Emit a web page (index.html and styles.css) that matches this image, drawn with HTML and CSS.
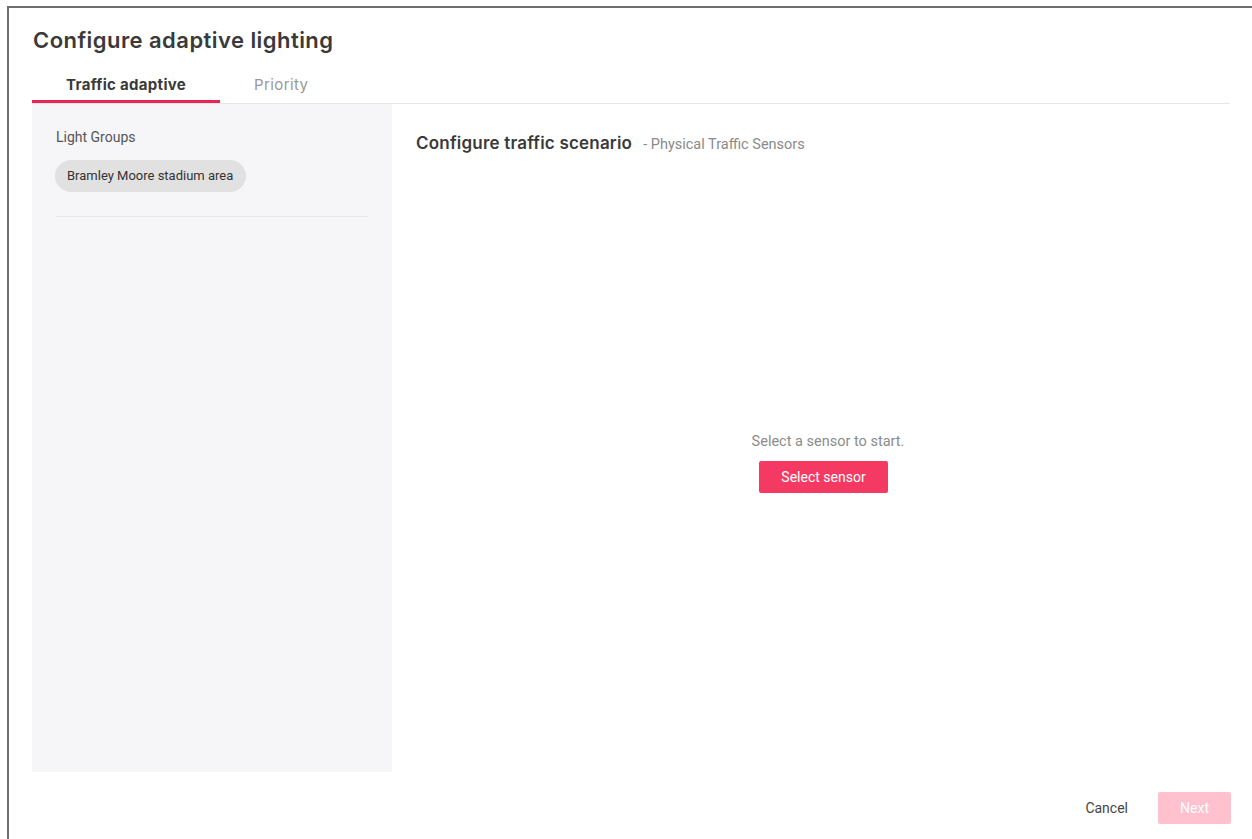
FILE: index.html
```html
<!DOCTYPE html>
<html lang="en">
<head>
<meta charset="utf-8">
<title>Configure adaptive lighting</title>
<link rel="stylesheet" href="styles.css">
</head>
<body>
<div class="dialog">
  <h1 class="dialog-title">Configure adaptive lighting</h1>
  <nav class="tabs">
    <button class="tab tab-active">Traffic adaptive</button>
    <button class="tab">Priority</button>
  </nav>
  <div class="dialog-body">
    <aside class="sidebar">
      <div class="sidebar-label">Light Groups</div>
      <div class="chip-list">
        <span class="chip">Bramley Moore stadium area</span>
      </div>
      <hr class="sidebar-divider">
    </aside>
    <section class="content">
      <header class="content-header">
        <h2 class="content-title">Configure traffic scenario</h2>
        <span class="content-subtitle">- Physical Traffic Sensors</span>
      </header>
      <div class="empty-state">
        <p class="empty-text">Select a sensor to start.</p>
        <button class="btn btn-primary btn-start">Select sensor</button>
      </div>
    </section>
  </div>
  <footer class="dialog-footer">
    <button class="btn btn-text">Cancel</button>
    <button class="btn btn-primary btn-disabled">Next</button>
  </footer>
</div>
</body>
</html>
```
FILE: styles.css
```css
* {
  box-sizing: border-box;
}

html, body {
  margin: 0;
  height: 100%;
  background: #ffffff;
  overflow: hidden;
}

body {
  font-family: Roboto, "Liberation Sans", sans-serif;
  color: #333;
}

.dialog {
  margin: 6px 0 0 7px;
  height: calc(100% - 6px);
  border-top: 2px solid #6e6e6e;
  border-left: 2px solid #6e6e6e;
  padding: 0 12px 0 23px;
  display: flex;
  flex-direction: column;
}

.dialog-title {
  margin: 18px 0 0 1px;
  font-family: Inter, "Open Sans", sans-serif;
  font-size: 22px;
  line-height: 28px;
  font-weight: 600;
  color: #3a3a3a;
  letter-spacing: 0.45px;
}

.tabs {
  display: flex;
  margin-top: 12px;
  margin-right: 10px;
  border-bottom: 1px solid #e6e6e6;
}

.tab {
  background: none;
  border: none;
  border-bottom: 3px solid transparent;
  padding: 9px 34px 5px;
  font-family: Inter, "Open Sans", sans-serif;
  font-size: 15px;
  line-height: 20px;
  font-weight: 400;
  letter-spacing: 0.4px;
  color: #999;
  cursor: pointer;
}

.tab-active {
  font-weight: 700;
  letter-spacing: 0.3px;
  color: #3a3a3a;
  border-bottom-color: #e8245a;
}

.dialog-body {
  display: flex;
  height: 668px;
}

.sidebar {
  width: 360px;
  flex: none;
  background: #f6f6f8;
  padding: 24px 24px 0 24px;
}

.sidebar-label {
  font-size: 14px;
  line-height: 18px;
  color: #555;
}

.chip-list {
  margin-top: 14px;
  display: flex;
}

.chip {
  display: inline-block;
  height: 32px;
  line-height: 32px;
  padding: 0 13px 0 12px;
  margin-left: -1px;
  border-radius: 16px;
  background: #e1e1e1;
  font-size: 13px;
  color: #333;
}

.sidebar-divider {
  margin: 24px 0 0;
  border: none;
  border-top: 1px solid #e8e8ea;
}

.content {
  flex: 1;
  display: flex;
  flex-direction: column;
  padding: 28px 0 0 24px;
}

.content-header {
  display: flex;
  align-items: baseline;
  gap: 11px;
}

.content-title {
  margin: 0;
  font-family: Inter, "Open Sans", sans-serif;
  font-size: 17px;
  line-height: 22px;
  font-weight: 600;
  letter-spacing: 0.2px;
  color: #3a3a3a;
}

.content-subtitle {
  font-size: 14.5px;
  color: #8a8a8a;
}

.empty-state {
  display: flex;
  flex-direction: column;
  align-items: center;
  margin-top: 278px;
}

.empty-text {
  margin: 0 0 9px;
  font-size: 14.5px;
  line-height: 20px;
  color: #8c8c8c;
}

.btn {
  font-family: Roboto, "Liberation Sans", sans-serif;
  font-size: 14px;
  border: none;
  background: none;
  cursor: pointer;
}

.btn-primary {
  height: 32px;
  padding: 0 22px;
  border-radius: 2px;
  background: #f43a63;
  color: #fff;
}

.btn-start {
  margin-right: 9px;
}

.btn-disabled {
  background: #ffc1cd;
  cursor: default;
  width: 73px;
  padding: 0;
}

.btn-text {
  color: #444;
  padding: 0;
}

.dialog-footer {
  display: flex;
  justify-content: flex-end;
  align-items: center;
  gap: 30px;
  margin-top: 20px;
  padding-right: 9px;
}
```
